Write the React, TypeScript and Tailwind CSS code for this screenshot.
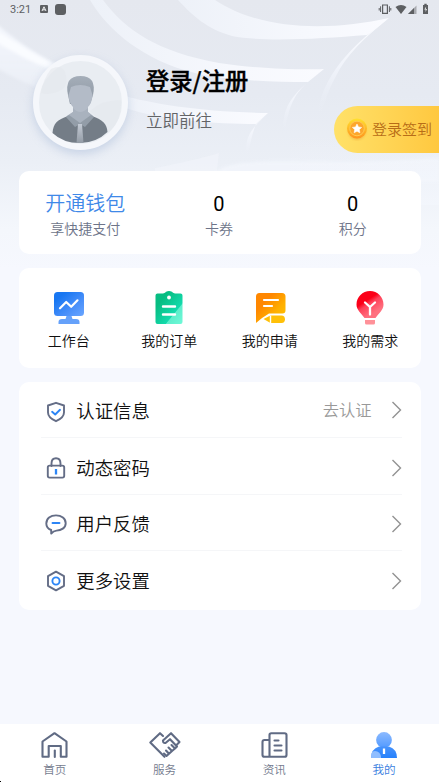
import type { ReactNode } from "react";

function Backdrop() {
  return (
    <svg className="absolute left-0 top-0 h-[270px] w-full" viewBox="0 0 439 270" preserveAspectRatio="none" aria-hidden="true">
      <defs>
        <linearGradient id="base" x1="0" y1="0" x2="0" y2="1">
          <stop offset="0" stopColor="#e5e8ef" />
          <stop offset="0.35" stopColor="#e6eaf2" />
          <stop offset="0.6" stopColor="#ebeff6" />
          <stop offset="0.85" stopColor="#f4f7fc" />
          <stop offset="1" stopColor="#f6f8fe" />
        </linearGradient>
        <linearGradient id="ray" x1="0" y1="0" x2="0" y2="1">
          <stop offset="0" stopColor="#f4f7fd" />
          <stop offset="1" stopColor="#edf1f8" stopOpacity="0.7" />
        </linearGradient>
        <linearGradient id="band" x1="0" y1="0" x2="1" y2="0">
          <stop offset="0" stopColor="#edf1f8" />
          <stop offset="0.6" stopColor="#f6f8fd" />
          <stop offset="1" stopColor="#fafbff" />
        </linearGradient>
        <linearGradient id="edge" x1="0" y1="0" x2="0" y2="1">
          <stop offset="0" stopColor="#fbfcff" />
          <stop offset="0.5" stopColor="#f0f3fa" />
          <stop offset="1" stopColor="#e9edf5" stopOpacity="0" />
        </linearGradient>
        <linearGradient id="low" x1="0" y1="0" x2="0" y2="1">
          <stop offset="0" stopColor="#f3f6fc" stopOpacity="0" />
          <stop offset="1" stopColor="#f5f8fe" />
        </linearGradient>
        <filter id="soft"><feGaussianBlur stdDeviation="1.5" /></filter>
      </defs>
      <path d="M0 0H439V270H0Z" fill="url(#base)" />
      <path d="M-6 22C20 44 46 60 70 72L60 95Q20 83 -6 66Z" fill="url(#ray)" filter="url(#soft)" />
      <path d="M-4 30C20 45 38 56 58 66L50 69C30 62 14 52 -4 42Z" fill="#fafcff" filter="url(#soft)" />
      <path d="M90 0C108 31 145 61 195 73C222 80 270 82 308 82L324 69C300 70 259 69 219 63C158 52 125 30 103 0Z" fill="url(#band)" />
      <path d="M178 0C193 16 207 29 232 36C262 42 318 39 367 35C378 28 385 21 389 18C330 31 262 31 215 0Z" fill="url(#band)" />
      <path d="M389 18C354 43 320 77 318 116C323 116 323 100 335 78C346 55 365 37 389 18Z" fill="url(#edge)" />
      <path d="M324 69C297 91 280 103 284 135C288 118 288 99 308 82Z" fill="url(#edge)" />
      <path d="M120 95C155 104 200 112 268 113L256 124C216 124 160 120 126 108Z" fill="url(#band)" />
      <path d="M268 113C252 128 243 137 247 160C250 145 252 134 256 124Z" fill="url(#edge)" />
      <path d="M155 168C180 163 202 158 219 153L217 171H155Z" fill="#f3f6fc" opacity=".5" />
      <path d="M215 173C238 152 303 168 439 158V182H215Z" fill="#f4f7fd" opacity=".7" filter="url(#soft)" />
      <path d="M290 135H439V205H290Z" fill="url(#low)" opacity=".5" />
    </svg>
  );
}

function StatusBar() {
  return (
    <div className="flex h-[18px] items-center pl-[10px] pr-[9px] text-[#5d5f62]">
      <span className="font-['Roboto'] text-[11px] font-normal leading-none">3:21</span>
      <svg className="ml-[9px] h-2 w-2" viewBox="0 0 8 8">
        <rect width="8" height="8" rx="1" fill="currentColor" />
        <path d="M2 6L4 1.8L6 6M2.8 4.8H5.2" fill="none" stroke="#f3f4f6" strokeWidth="1" />
      </svg>
      <span className="ml-[7px] h-[11px] w-[11px] rounded-[3px] bg-current" />
      <svg className="ml-auto -mt-px h-3 w-[52px]" viewBox="0 0 52 12" fill="currentColor">
        <path d="M4.6 2H9.4V10.4H4.6Z" fill="none" stroke="currentColor" strokeWidth="1.2" />
        <path d="M2.6 3.3V9M1.2 5V7.5M11.4 3.3V9M12.8 5V7.5" stroke="currentColor" strokeWidth="1" />
        <path d="M17.5 4Q23 .2 28.5 4L23 11Z" />
        <path d="M30 11L38.5 2.5V11Z" opacity=".45" />
        <path d="M30 11L36 5V11Z" />
        <path d="M45 2H46.3V.8H48.7V2H50V11H45Z" />
        <path d="M48.2 3.4L46.3 6.6H47.6V9L49 6H47.8Z" fill="#eee" />
      </svg>
    </div>
  );
}

function Avatar() {
  return (
    <div className="h-[95px] w-[95px] shrink-0 rounded-full border-[6px] border-[#f5f7fb] bg-[#e9edf2] shadow-[0_4px_10px_rgba(151,172,208,0.4)]">
      <svg className="h-full w-full" viewBox="0 0 83 83">
        <defs>
          <linearGradient id="hair" x1="0" y1="0" x2="0" y2="1">
            <stop stopColor="#a5aeb9" /><stop offset="1" stopColor="#8c96a2" />
          </linearGradient>
          <linearGradient id="tie" x1="0" y1="0" x2="0" y2="1">
            <stop stopColor="#c4cbd5" /><stop offset="1" stopColor="#939ba5" />
          </linearGradient>
        </defs>
        <path d="M12 8Q25 2 27 15Q29 22 24 28Q12 35 2 32Q4 18 12 8ZM51 50Q62 39 82 39Q83 59 70 71Q62 60 51 50Z" fill="#e4e8ed" opacity=".6" />
        <path d="M29 34Q25 15 41.5 15Q58 15 54 34L51 43H31Z" fill="url(#hair)" />
        <path d="M29.5 34Q31 30 32 26Q41 22 51 26L53.5 34Q53 42 49 46V51L54 55L41 66L28 55L34 51V46Q30 42 29.5 34Z" fill="#b3bbc7" />
        <path d="M34 47Q41 55 49 47V51L54 55L41 66L28 55L34 51Z" fill="#a9b2be" />
        <path d="M13.500 72C14.500 62 18 59 29 55L41 64L53 55C64 59 68 63 68.500 71Q57 82 41 82Q24 82 13.500 72Z" fill="#747d87" />
        <path d="M30 54L27 56L36 66L41 63L46 66L55 56L52 54L41 62Z" fill="#939da8" />
        <path d="M39 63H43L44.5 82H37.5Z" fill="url(#tie)" />
      </svg>
    </div>
  );
}

function Coin() {
  return (
    <svg className="h-6 w-6" viewBox="0 0 24 24">
      <defs>
        <linearGradient id="coin" x1="0" y1="0" x2="0" y2="1">
          <stop stopColor="#ffe12f" /><stop offset="1" stopColor="#ff931e" />
        </linearGradient>
        <filter id="coinShadow"><feGaussianBlur stdDeviation="1.2" /></filter>
      </defs>
      <circle cx="12" cy="14" r="9" fill="#e99728" opacity=".45" filter="url(#coinShadow)" />
      <circle cx="12" cy="11.5" r="10" fill="url(#coin)" />
      <circle cx="12" cy="11.5" r="7.3" fill="#fda62c" stroke="#ffcb52" />
      <path d="M12 7L13.5 9.9L16.7 10.4L14.4 12.6L14.9 15.8L12 14.3L9.1 15.8L9.6 12.6L7.3 10.4L10.5 9.9Z" fill="#fff" stroke="#fff" strokeWidth=".5" strokeLinejoin="round" />
    </svg>
  );
}

function WorkbenchIcon() {
  return (
    <svg className="h-9 w-9" viewBox="0 0 36 36">
      <defs><linearGradient id="monitor" x1="0" y1="0" x2="1" y2="1"><stop offset=".2" stopColor="#1877f2" /><stop offset=".65" stopColor="#4a90fa" /><stop offset="1" stopColor="#69a5ff" /></linearGradient></defs>
      <rect x="3" y="2" width="30" height="24" rx="3.5" fill="url(#monitor)" />
      <path d="M15.5 26H20.5L21.5 29H25Q28.5 29 28.5 32V34H7.5V32Q7.5 29 11 29H14.5Z" fill="#65a1fa" />
      <path d="M9 18.3L15.2 12L20.2 16.8L26.5 10.3" fill="none" stroke="#fff" strokeWidth="2.2" strokeLinecap="round" strokeLinejoin="round" />
    </svg>
  );
}

function OrdersIcon() {
  return (
    <svg className="h-9 w-9" viewBox="0 0 36 36">
      <defs><linearGradient id="clip" x1="0" y1="0" x2="1" y2="1"><stop offset=".25" stopColor="#07bd82" /><stop offset=".68" stopColor="#13daac" /><stop offset=".7" stopColor="#5eeecb" /><stop offset="1" stopColor="#70f9d8" /></linearGradient></defs>
      <path d="M6.5 3.5H12Q14.5 3 15 1.8Q18 .2 21 1.8Q21.5 3 24 3.5H29.5Q31.5 3.5 31.5 5.5V32Q31.5 34 29.5 34H6.5Q4.5 34 4.5 32V5.5Q4.5 3.5 6.5 3.5Z" fill="url(#clip)" />
      <circle cx="18" cy="7.5" r="1.9" fill="#fff" />
      <path d="M12 16.5H24M12 24.5H24" stroke="#fff" strokeWidth="2.4" strokeLinecap="round" />
    </svg>
  );
}

function RequestsIcon() {
  return (
    <svg className="h-9 w-9" viewBox="0 0 36 36">
      <defs><linearGradient id="note" x1="0" y1="0" x2="1" y2="1"><stop offset=".3" stopColor="#ff8700" /><stop offset=".65" stopColor="#ffb000" /><stop offset="1" stopColor="#ffc400" /></linearGradient></defs>
      <path d="M7.500 3H30Q33.500 3 33.500 6.500V20.500Q33.500 23.500 30.500 23.500H17Q10 27.500 4 33V6.500Q4 3 7.500 3Z" fill="url(#note)" />
      <path d="M11.5 29L18.5 25.5H29.5Q33 25.5 33 29.3Q33 33 29.5 33H18.5Z" fill="#ffc008" />
      <path d="M18.5 25.5V33" stroke="#fff" strokeWidth="1.4" />
      <path d="M12 10H26M12 16H20" stroke="#fff" strokeWidth="2.2" strokeLinecap="round" />
    </svg>
  );
}

function NeedsIcon() {
  return (
    <svg className="h-9 w-9" viewBox="0 0 36 36">
      <defs><linearGradient id="bulb" x1="0.15" y1="0" x2=".8" y2="1"><stop offset=".35" stopColor="#fb0018" /><stop offset=".48" stopColor="#ff4159" /><stop offset=".8" stopColor="#ff7180" /></linearGradient></defs>
      <path d="M18 1C10.5 1 4.5 7 4.5 14.5C4.5 20 9 23 12.5 28H23.5C27 23 31.5 20 31.5 14.5C31.5 7 25.5 1 18 1Z" fill="url(#bulb)" />
      <path d="M13 30H23V33Q23 34.5 21.5 34.5H14.5Q13 34.5 13 33Z" fill="#ff9199" />
      <path d="M13 12.5L18 17L23 12.5M18 17V24.5" fill="none" stroke="#fff" strokeWidth="2.3" strokeLinecap="round" strokeLinejoin="round" />
    </svg>
  );
}

const lineIcons: ReactNode[] = [
  <><path d="M11 1.8L19 4.5V11.5C19 15.5 15.5 18.2 11 20.2C6.5 18.2 3 15.5 3 11.5V4.5Z" /><path d="M7.1 10.8L10.2 13.5L15 8.8" stroke="#2c85f6" /></>,
  <><path d="M6.5 9V6.5Q6.5 1.2 11 1.2Q15.5 1.2 15.5 6.5V9" /><rect x="2.8" y="8.6" width="16.4" height="12" rx="1.8" /><path d="M11 12V17.5" stroke="#2c85f6" strokeWidth="2.3" strokeLinecap="butt" /></>,
  <><path d="M6.2 17C3.3 15.800 1.3 13.600 1.3 10.4C1.3 5.6 5.5 2.4 11 2.4S20.7 5.6 20.7 10.200S16.200 17.6 11.500 17.6Q8.500 17.800 6.200 20.600Z" /><path d="M7.5 10H14.5" stroke="#2c85f6" /></>,
  <><path d="M11 1.7L19 6.2V15.8L11 20.3L3 15.8V6.2Z" /><circle cx="11" cy="11" r="3.6" stroke="#2c85f6" /></>,
];

function ListIcon({ index }: { index: number }) {
  return <svg className="h-[22px] w-[22px]" viewBox="0 0 22 22" fill="none" stroke="#646d86" strokeWidth="1.9" strokeLinecap="round" strokeLinejoin="round">{lineIcons[index]}</svg>;
}

const settings = ["认证信息", "动态密码", "用户反馈", "更多设置"];

const shortcuts = [
  { label: "工作台", icon: <WorkbenchIcon /> },
  { label: "我的订单", icon: <OrdersIcon /> },
  { label: "我的申请", icon: <RequestsIcon /> },
  { label: "我的需求", icon: <NeedsIcon /> },
];

const tabs = [
  {
    label: "首页",
    icon: <><path d="M3 10.5L15 2.2L27 10.5V25.8H21.3V15H9.2V25.8H3Z" /><path d="M15.3 19.5V26" /></>,
  },
  {
    label: "服务",
    icon: <><path d="M13.5 5L10.500 2.2L.8 11.500L15 25.800" /><path d="M27.500 13.5L30 11L21.500 2.200L13.500 9.500Q13.500 12.500 16 12L20.500 8.200L27.500 15.5L25.500 17.5L22 14M25.500 17.500L22.500 20L19 16.500M22.500 20L19.500 22.800L16.500 19.500M19.500 22.800L17 25L14.500 22.500" /></>,
  },
  {
    label: "资讯",
    icon: <><path d="M10 25.8V4Q10 2.2 11.8 2.2H25Q27 2.2 27 4V24Q27 25.8 25 25.8H5Q3 25.8 3 24V11Q3 9 5 9H10" /><path d="M15 9.5H19M15 14.5H22M15 19.5H22" /></>,
  },
];

function ProfileTabIcon() {
  return (
    <svg className="h-7 w-[30px]" viewBox="0 0 30 28">
      <defs>
        <linearGradient id="head" x1="0" y1="0" x2="0" y2="1"><stop stopColor="#8cbaff" /><stop offset="1" stopColor="#529aff" /></linearGradient>
        <linearGradient id="body" x1="0" y1="0" x2="0" y2="1"><stop stopColor="#4793fc" /><stop offset="1" stopColor="#2681fc" /></linearGradient>
        <clipPath id="shoulders"><path d="M2 27Q2 18 10 15.5H20Q28 18 28 27Z" /></clipPath>
      </defs>
      <circle cx="15" cy="9" r="7.9" fill="url(#head)" />
      <path d="M2 27Q2 18 10 15.5H20Q28 18 28 27Z" fill="url(#body)" />
      <circle cx="6" cy="26" r="6" fill="#a9ccff" opacity=".8" clipPath="url(#shoulders)" />
      <path d="M15 17.5V23" stroke="#fff" strokeWidth="2.3" />
    </svg>
  );
}

export default function App() {
  return (
    <div className="relative flex h-[782px] w-full flex-col overflow-hidden bg-[#f6f8fe] font-['Noto_Sans_CJK_SC',sans-serif] font-[350] text-[#101010]">
      <Backdrop />
      <div className="relative flex flex-1 flex-col">
        <StatusBar />
        <header className="flex h-[153px] items-start pl-[33px] pt-[36.5px]">
          <Avatar />
          <div className="ml-[18px] flex flex-col pt-[11px]">
            <h1 className="flex h-[30px] items-center text-[23.3px] font-medium leading-none text-black [-webkit-text-stroke:0.35px_black]">登录/注册</h1>
            <p className="mt-[12.5px] flex h-[24px] items-center text-[16.5px] leading-none text-[#626467]">立即前往</p>
          </div>
          <button className="ml-auto mt-[51px] flex h-[47px] w-[105px] items-center rounded-l-full bg-linear-to-r from-[#ffe168] to-[#ffc83f] pl-[11px] text-[15px] leading-none text-[#b86d17]">
            <Coin />
            <span className="-mt-px ml-[3px] whitespace-nowrap">登录签到</span>
          </button>
        </header>

        <main className="flex flex-col gap-[14px] px-[18.5px]">
          <section className="grid h-[83px] grid-cols-3 rounded-[10px] bg-white pr-px pt-[20px] text-center">
            {[["开通钱包", "享快捷支付"], ["0", "卡券"], ["0", "积分"]].map(([value, label], i) => (
              <div key={label} className="flex flex-col items-center">
                <strong className={i === 0 ? "flex h-6 items-center text-[20px] font-[350] leading-none text-[#3f89e8]" : "flex h-6 items-center pt-px font-['Roboto'] text-[20px] font-normal leading-none text-black"}>{value}</strong>
                <span className="mt-[3px] flex h-5 items-center text-[14px] leading-none text-[#6d7489]">{label}</span>
              </div>
            ))}
          </section>

          <section className="grid h-[100px] grid-cols-4 rounded-[10px] bg-white pt-[22px]">
            {shortcuts.map(({ label, icon }) => (
              <button key={label} className="flex flex-col items-center">
                {icon}
                <span className="mt-[4px] flex h-5 items-center text-[14px] leading-none">{label}</span>
              </button>
            ))}
          </section>

          <section className="h-[227.5px] rounded-[10px] bg-white pl-[22px] pr-[19px]">
            {settings.map((label, i) => (
              <button key={label} className="flex h-[56.3px] w-full items-center border-b border-[#f5f6f8] pl-[4.2px] pt-[4px] last:border-0">
                <ListIcon index={i} />
                <span className="-mt-[2px] ml-[9.6px] text-[18.4px] leading-none">{label}</span>
                {i === 0 && <span className="-mt-[5px] ml-auto mr-[19px] text-[16.3px] leading-none text-[#999]">去认证</span>}
                <svg className={i === 0 ? "-mt-1 h-[18px] w-[11px]" : "ml-auto h-[18px] w-[11px]"} viewBox="0 0 11 18" fill="none" stroke="#929292" strokeWidth="1.4"><path d="M1.5 1L9.5 9L1.5 17" /></svg>
              </button>
            ))}
          </section>
        </main>

        <nav className="mt-auto grid h-[58px] grid-cols-4 bg-white pt-[7px] text-[11.6px] text-[#747b8e]">
          {tabs.map(({ label, icon }) => (
            <button key={label} className="flex flex-col items-center">
              <svg className="h-7 w-[31px] overflow-visible" viewBox="0 0 30 28" fill="none" stroke="#606b84" strokeWidth="2.1" strokeLinecap="round" strokeLinejoin="round">{icon}</svg>
              <span className="mt-[3px] flex h-4 items-center leading-none">{label}</span>
            </button>
          ))}
          <button className="flex flex-col items-center text-[#397ee0]">
            <ProfileTabIcon />
            <span className="mt-[3px] flex h-4 items-center leading-none">我的</span>
          </button>
        </nav>
      </div>
      <span className="absolute bottom-0 left-0 h-px w-px bg-black" />
    </div>
  );
}
